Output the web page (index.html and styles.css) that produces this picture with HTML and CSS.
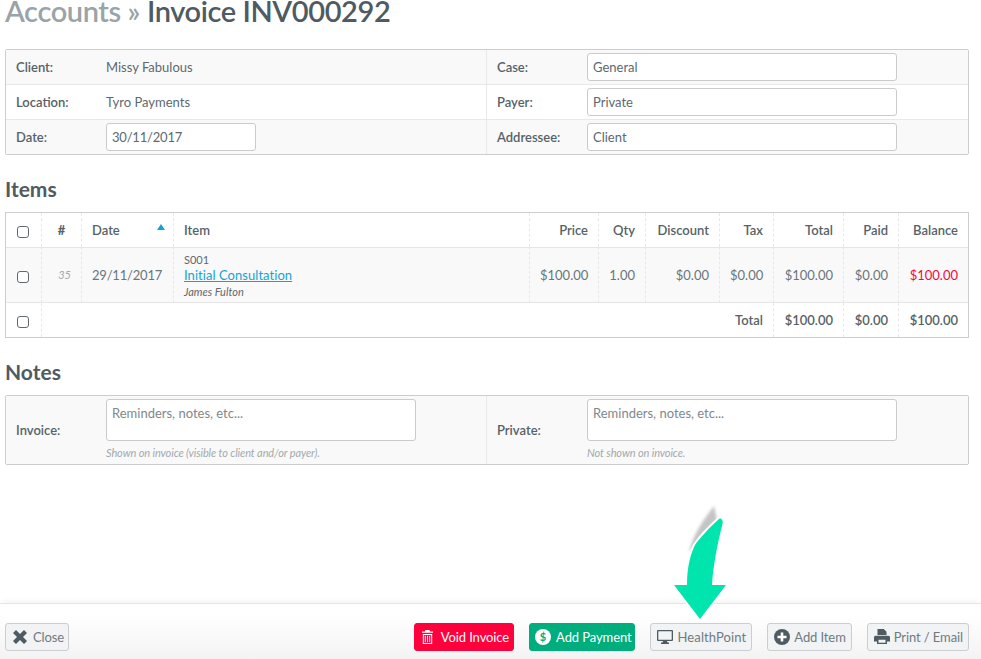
FILE: index.html
```html
<!DOCTYPE html>
<html lang="en">
<head>
<meta charset="utf-8">
<title>Invoice INV000292</title>
<link rel="stylesheet" href="styles.css">
</head>
<body>
<main class="content">
  <h1 class="title"><span class="crumb">Accounts » </span>Invoice INV000292</h1>

  <section class="panel">
    <div class="row">
      <div class="cell"><span class="label">Client:</span><span>Missy Fabulous</span></div>
      <div class="cell"><span class="label">Case:</span><div class="input wide">General</div></div>
    </div>
    <div class="row alt">
      <div class="cell"><span class="label">Location:</span><span>Tyro Payments</span></div>
      <div class="cell"><span class="label">Payer:</span><div class="input wide">Private</div></div>
    </div>
    <div class="row">
      <div class="cell"><span class="label">Date:</span><div class="input date">30/11/2017</div></div>
      <div class="cell"><span class="label">Addressee:</span><div class="input wide">Client</div></div>
    </div>
  </section>

  <h2 class="heading">Items</h2>
  <table class="items">
    <colgroup>
      <col class="c-check"><col class="c-num"><col class="c-date"><col class="c-item"><col class="c-price"><col class="c-qty"><col class="c-disc"><col class="c-tax"><col class="c-total"><col class="c-paid"><col class="c-bal">
    </colgroup>
    <thead>
      <tr>
        <th class="center"><span class="check"></span></th>
        <th class="hash">#</th>
        <th class="left sorted">Date<span class="caret"></span></th>
        <th class="left">Item</th>
        <th>Price</th><th>Qty</th><th>Discount</th><th>Tax</th><th>Total</th><th>Paid</th><th>Balance</th>
      </tr>
    </thead>
    <tbody>
      <tr class="line">
        <td class="center"><span class="check"></span></td>
        <td class="num">35</td>
        <td class="left datecell">29/11/2017</td>
        <td class="left itemcell">
          <div class="code">S001</div>
          <a class="link" href="#">Initial Consultation</a>
          <div class="who">James Fulton</div>
        </td>
        <td>$100.00</td><td>1.00</td><td>$0.00</td><td>$0.00</td><td>$100.00</td><td>$0.00</td><td class="owing">$100.00</td>
      </tr>
    </tbody>
    <tfoot>
      <tr>
        <td class="center"><span class="check"></span></td>
        <td class="foot-label" colspan="7">Total</td>
        <td class="strong">$100.00</td><td class="strong">$0.00</td><td class="strong">$100.00</td>
      </tr>
    </tfoot>
  </table>

  <h2 class="heading notes-heading">Notes</h2>
  <section class="panel notes">
    <div class="row">
      <div class="cell"><span class="label">Invoice:</span>
        <div class="note"><div class="input area narrow">Reminders, notes, etc...</div><div class="hint">Shown on invoice (visible to client and/or payer).</div></div>
      </div>
      <div class="cell"><span class="label">Private:</span>
        <div class="note"><div class="input area wide">Reminders, notes, etc...</div><div class="hint">Not shown on invoice.</div></div>
      </div>
    </div>
  </section>
</main>

<footer class="bar">
  <button class="btn b-close" type="button">
    <svg class="ico" viewBox="0 0 14 14"><path d="M0 3 3 0 7 4l4-4 3 3-4 4 4 4-3 3-4-4-4 4-3-3 4-4z" fill="#4f5b62"/></svg>Close
  </button>
  <div class="spacer"></div>
  <button class="btn danger" type="button">
    <svg class="ico ico-t" viewBox="0 0 11 14"><path d="M3.500 0h4l.7 1.500H11v1.300H0V1.500h2.800zM.8 4h9.400v10H.8zm1 1v8h7.400V5zm1 .8h1v6.400h-1zm2.200 0h1v6.400H5zm2.200 0h1v6.400h-1z" fill="#fff" fill-rule="evenodd"/></svg>Void Invoice
  </button>
  <button class="btn success" type="button">
    <svg class="ico ico-l" viewBox="0 0 16 16"><circle cx="8" cy="8" r="8" fill="#fff"/><text class="dollar" x="8" y="12">$</text></svg>Add Payment
  </button>
  <button class="btn b-hp" type="button">
    <svg class="ico ico-w" viewBox="0 0 16 14"><path d="M1 0h14a1 1 0 0 1 1 1v9a1 1 0 0 1-1 1H10l.4 1.500H12V14H4v-1.500h1.600L6 11H1a1 1 0 0 1-1-1V1a1 1 0 0 1 1-1zm.3 1.300v8.400h13.400V1.300z" fill="#4f5b62" fill-rule="evenodd"/></svg>HealthPoint
  </button>
  <button class="btn b-add" type="button">
    <svg class="ico ico-l" viewBox="0 0 16 16"><circle cx="8" cy="8" r="8" fill="#4f5b62"/><path d="M6.700 3.500h2.600v3.200h3.200v2.600H9.300v3.200H6.700V9.300H3.500V6.700h3.200z" fill="#fff"/></svg>Add Item
  </button>
  <button class="btn b-print" type="button">
    <svg class="ico ico-p" viewBox="0 0 16 15"><path d="M3.500 0h6.300L12.500 2.700V6h-9zM1.500 6.800h13A1.500 1.500 0 0 1 16 8.300v4.200h-3V15H3v-2.500H0V8.300a1.500 1.500 0 0 1 1.500-1.500zM4.500 10.800v3h7v-3z" fill="#4f5b62" fill-rule="evenodd"/></svg>Print / Email
  </button>
</footer>

<svg class="arrow" viewBox="0 0 70 125" aria-hidden="true">
  <defs><filter id="soft" x="-60%" y="-20%" width="220%" height="140%"><feGaussianBlur stdDeviation="1.500"/></filter></defs>
  <path d="M44 8C35 20 24 34 19 54L27 47C33 38 40 30 47 22z" fill="#c4c4c4" filter="url(#soft)"/>
  <path d="M49 21C39 30 29 41 25 47 21 55 17 68 17 87H4L30 121 56 87H42C43 70 47 47 52.500 26 53.500 22 51 19.500 49 21z" fill="none" stroke="#fff" stroke-width="4" stroke-linejoin="round"/>
  <path d="M49 21C39 30 29 41 25 47 21 55 17 68 17 87H4L30 121 56 87H42C43 70 47 47 52.500 26 53.500 22 51 19.500 49 21z" fill="#00e4ae"/>
</svg>
</body>
</html>
```
FILE: styles.css
```css
* { box-sizing: border-box; }

html, body { height: 100%; }

body {
  margin: 0;
  height: 659px;
  overflow: hidden;
  display: flex;
  flex-direction: column;
  position: relative;
  background: #fff;
  color: #5d696f;
  font: 13px/18px Lato, "Open Sans", sans-serif;
}

.content { padding: 0 12px 0 5px; }

.title {
  margin: -9px 0 0;
  height: 58px;
  font-size: 29px;
  line-height: 40px;
  font-weight: 600;
  letter-spacing: -.4px;
  color: #4f5b62;
  white-space: nowrap;
}

.crumb { color: #9aa4a8; }

.panel {
  border: 1px solid #cdcdcd;
  border-radius: 2px;
  background: #fff;
}

.row { display: flex; height: 35px; border-top: 1px solid #e8e8e8; background: #f9f9f9; }
.row:first-child { border-top: 0; height: 34px; }
.row.alt { background: #fff; }

.cell {
  display: flex;
  align-items: center;
  padding-left: 10px;
  width: 480px;
  flex: none;
}
.cell + .cell { width: auto; flex: 1; border-left: 1px solid #e8e8e8; }

.label { width: 90px; flex: none; font-weight: 600; color: #566268; }

.input {
  height: 28px;
  padding: 0 5px;
  line-height: 26px;
  background: #fff;
  border: 1px solid #cbcbcb;
  border-radius: 3px;
}
.wide { width: 310px; }
.date { width: 150px; letter-spacing: -.2px; }
.narrow { width: 310px; }

.heading {
  margin: 0;
  height: 57px;
  padding-top: 21px;
  font-size: 21px;
  line-height: 26px;
  font-weight: 700;
  color: #4f5b62;
}

.items {
  width: 964px;
  table-layout: fixed;
  border-collapse: separate;
  border-spacing: 0;
  border: 1px solid #cdcdcd;
}

.c-check { width: 35px; }
.c-num { width: 40px; }
.c-date { width: 92px; }
.c-item { width: 356px; }
.c-price { width: 69px; }
.c-qty { width: 47px; }
.c-disc { width: 74px; }
.c-tax { width: 54px; }
.c-total { width: 70px; }
.c-paid { width: 55px; }
.c-bal { width: 70px; }

.items th, .items td {
  padding: 0 10px;
  text-align: right;
  border-left: 1px dashed #e8e8e8;
  white-space: nowrap;
  color: #566268;
}
.items td { color: #6a757a; }
.items th:first-child, .items td:first-child { border-left: 0; }
.items th { height: 34px; font-weight: 600; }
.items .line td {
  height: 56px;
  background: #f9f9f9;
  border-top: 1px solid #e6e6e6;
  border-bottom: 1px solid #e6e6e6;
}
.items tfoot td { height: 34px; }

.items .center { text-align: center; padding: 3px 1px 0 0; }
.items .hash { text-align: center; padding: 0; font-weight: 700; }
.items .left { text-align: left; }
.items .num { font-size: 11px; font-style: italic; color: #a3a9ac; }
.items .datecell { background: #f3f3f3; letter-spacing: -.2px; }
.items .foot-label, .items .strong { font-weight: 600; color: #566268; }
.items .owing { color: #f8063f; }

.sorted { position: relative; }

.caret {
  position: absolute;
  top: 11px;
  right: 8px;
  border: 4.500px solid transparent;
  border-top: 0;
  border-bottom: 6px solid #14a3cf;
}

.check {
  display: block;
  width: 12px;
  height: 12px;
  margin: auto;
  background: #fff;
  border: 1px solid #62696e;
  border-radius: 3px;
}

.items .itemcell { line-height: 15px; padding-top: 3px; color: #5d696f; }
.code { font-size: 11px; line-height: 14px; }
.link { color: #14a3d4; line-height: 17px; letter-spacing: .05px; text-decoration: underline; display: block; }
.who { font-size: 11px; font-style: italic; line-height: 16px; }

.notes-heading { height: 57px; padding-top: 21px; }

.notes .row { height: 68px; }
.note { align-self: flex-start; padding-top: 3px; }
.area { height: 42px; line-height: 26px; color: #7f888c; }
.hint {
  margin-top: 3px;
  font-size: 11px;
  letter-spacing: -.1px;
  line-height: 17px;
  font-style: italic;
  color: #a3a9ac;
}

.bar {
  margin-top: auto;
  height: 56px;
  display: flex;
  align-items: flex-start;
  gap: 15px;
  padding: 19px 12px 0 5px;
  background: linear-gradient(#fff 20%, #f3f3f3);
  border-top: 1px solid #e6e6e6;
  box-shadow: 0 -4px 6px -2px rgba(0, 0, 0, .05);
}

.spacer { flex: 1; }

.btn {
  height: 28px;
  display: inline-flex;
  align-items: center;
  gap: 4px;
  padding: 0 5px 1px 6px;
  font: 13px Lato, "Open Sans", sans-serif;
  letter-spacing: -.1px;
  color: #707b80;
  background: #f1f3f4;
  border: 1px solid #cbced0;
  border-radius: 3px;
}

.b-close { padding: 0 4px 1px 7px; gap: 6px; }
.b-hp { gap: 5px; letter-spacing: .1px; padding-right: 5px; }
.danger { background: #ff003c; border-color: #ff003c; color: #fff; padding: 0 4px 1px 7px; gap: 8px; }
.success { background: #00ad7c; border-color: #00ad7c; color: #fff; padding: 0 2px 1px 5px; gap: 5px; }

.ico { width: 14px; height: 14px; flex: none; }
.ico-t { width: 11px; }
.ico-l { width: 16px; height: 16px; }
.ico-w { width: 16px; height: 14px; }
.ico-p { width: 16px; height: 15px; }

.dollar {
  font: 700 11px Lato, sans-serif;
  fill: #00ad7c;
  text-anchor: middle;
}

.arrow {
  position: absolute;
  left: 670px;
  top: 498px;
  width: 70px;
  height: 125px;
}
```
